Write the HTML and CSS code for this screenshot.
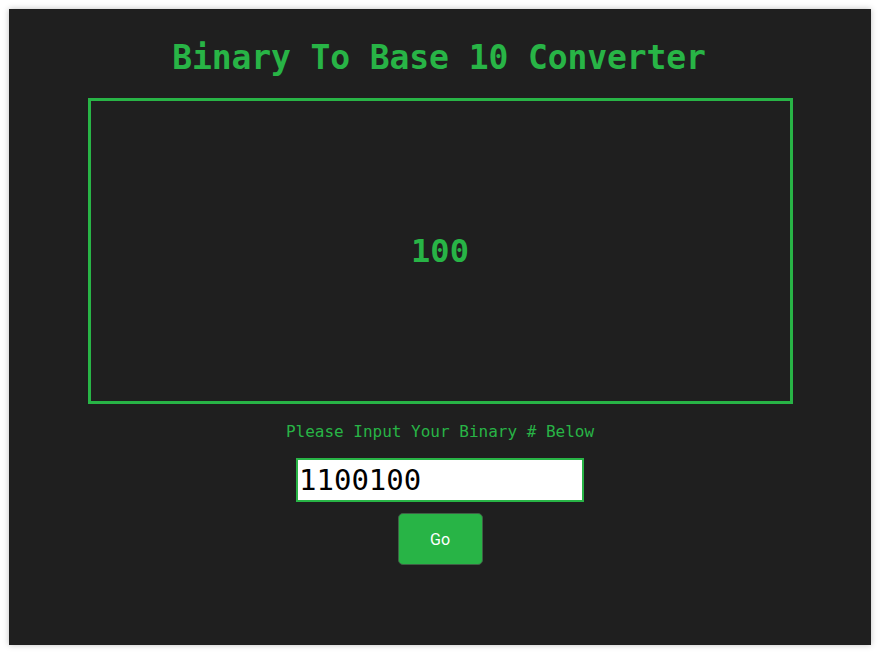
FILE: index.html
```html
<!DOCTYPE html>
<html>
<head>
<meta charset="utf-8">
<link rel="stylesheet" href="styles.css">
<title>Binary To Base 10 Converter</title>
</head>
<body>
<main class="panel">
  <h1 class="title">Binary To Base 10 Converter</h1>
  <section class="result"><span class="result-value">100</span></section>
  <p class="prompt">Please Input Your Binary # Below</p>
  <input class="binary-input" type="text" value="1100100">
  <button class="go-btn">Go</button>
</main>
</body>
</html>
```
FILE: styles.css
```css
html, body {
  margin: 0;
  padding: 0;
  background: #ffffff;
}
body {
  padding: 9px 8px 8px 8px;
}
.panel {
  box-sizing: border-box;
  height: 636px;
  margin-left: 1px;
  background: #1f1f1f;
  box-shadow: 0 0 6px rgba(0,0,0,0.25);
  display: flex;
  flex-direction: column;
  align-items: center;
  font-family: "DejaVu Sans Mono", "Liberation Mono", monospace;
  color: #28b446;
}
.title {
  margin: 28px 0 0 0;
  font-size: 33px;
  line-height: 42px;
  font-weight: bold;
  letter-spacing: -0.1px;
  padding-right: 2px;
}
.result {
  box-sizing: border-box;
  margin-top: 19px;
  width: 705px;
  height: 306px;
  border: 3px solid #28b446;
  display: flex;
  align-items: center;
  justify-content: center;
}
.result-value {
  font-size: 32px;
  font-weight: bold;
}
.prompt {
  margin: 18px 0 0 0;
  font-size: 16px;
  line-height: 20px;
}
.binary-input {
  box-sizing: border-box;
  margin-top: 16px;
  width: 288px;
  height: 44px;
  border: 2px solid #28b446;
  background: #ffffff;
  padding: 0 2px 0 1px;
  font-family: "DejaVu Sans Mono", monospace;
  font-size: 29px;
  color: #000;
  outline: none;
}
.go-btn {
  box-sizing: border-box;
  margin-top: 11px;
  width: 85px;
  height: 52px;
  background: #28b446;
  border: 1px solid #3f5f45;
  border-radius: 5px;
  color: #ffffff;
  font-family: Roboto, "Noto Sans", sans-serif;
  font-size: 16px;
  font-weight: 400;
}
```
